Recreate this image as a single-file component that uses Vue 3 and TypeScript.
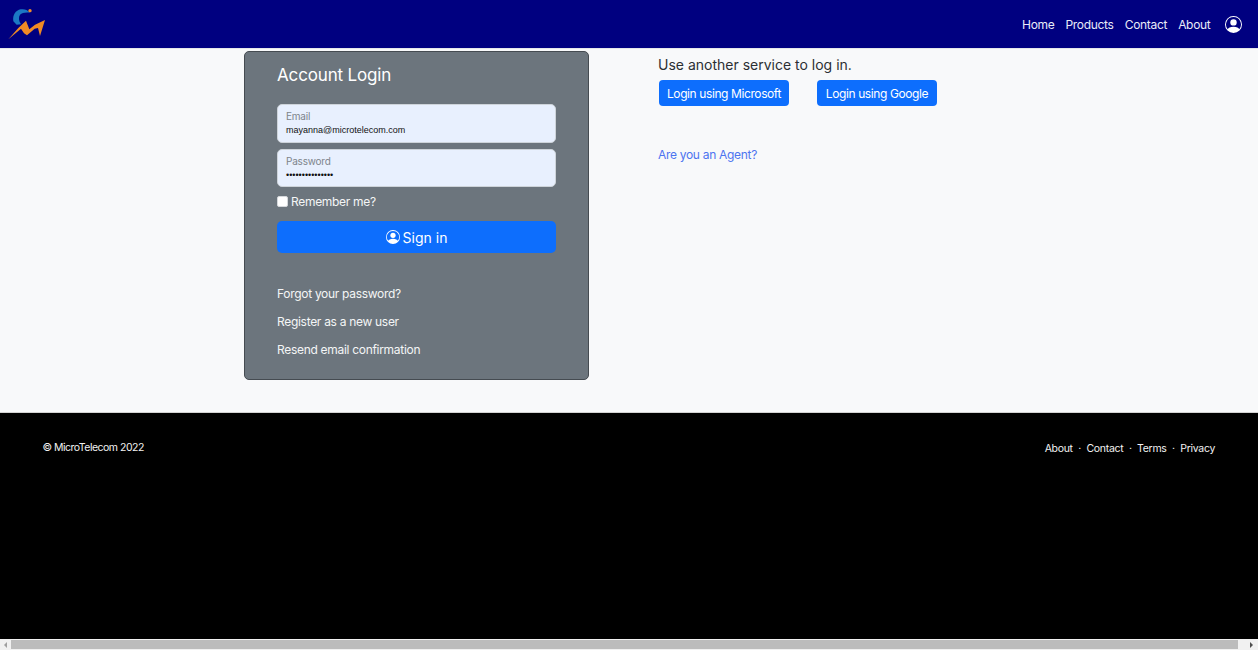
<script setup lang="ts">
const navLinks: string[] = ['Home', 'Products', 'Contact', 'About']
const cardLinks: string[] = ['Forgot your password?', 'Register as a new user', 'Resend email confirmation']
const footerLinks: string[] = ['About', 'Contact', 'Terms', 'Privacy']
</script>

<template>
  <div class="page">
    <header class="nav">
      <a class="logo" href="#" aria-label="MicroTelecom">
        <svg width="50" height="40" viewBox="0 12 150 120">
          <path d="M40 64C37 45 47 31 62 28C72 26 82 29 90 38C78 36 66 38 60 44C55 52 56 62 63 73L50 74Z" fill="#1b78c4" />
          <circle cx="90" cy="32" r="5" fill="#ee8a2a" />
          <path d="M25 118L55 84L78 62L88 88L105 74L135 60L120 108L114 84L104 86L81 106L72 100L63 86Z" fill="#f08a24" />
        </svg>
      </a>
      <nav class="nav-links">
        <a v-for="link in navLinks" :key="link" href="#">{{ link }}</a>
        <a class="account" href="#" aria-label="Account">
          <svg width="17" height="17" viewBox="0 0 16 16" fill="#fff">
            <path d="M11 6a3 3 0 1 1-6 0 3 3 0 0 1 6 0z" />
            <path fill-rule="evenodd" d="M0 8a8 8 0 1 1 16 0A8 8 0 0 1 0 8zm8-7a7 7 0 0 0-5.468 11.370C3.242 11.226 4.805 10 8 10s4.757 1.225 5.468 2.370A7 7 0 0 0 8 1z" />
          </svg>
        </a>
      </nav>
    </header>

    <main class="main">
      <section class="card">
        <h2>Account Login</h2>
        <div class="field">
          <span class="label">Email</span>
          <span class="value">mayanna@microtelecom.com</span>
        </div>
        <div class="field">
          <span class="label">Password</span>
          <span class="value">•••••••••••••••</span>
        </div>
        <label class="remember">
          <input type="checkbox" />
          <span>Remember me?</span>
        </label>
        <button class="signin" type="button">
          <svg width="14" height="14" viewBox="0 0 16 16" fill="#fff">
            <path d="M11 6a3 3 0 1 1-6 0 3 3 0 0 1 6 0z" />
            <path fill-rule="evenodd" d="M0 8a8 8 0 1 1 16 0A8 8 0 0 1 0 8zm8-7a7 7 0 0 0-5.468 11.370C3.242 11.226 4.805 10 8 10s4.757 1.225 5.468 2.370A7 7 0 0 0 8 1z" />
          </svg>
          <span>Sign in</span>
        </button>
        <div class="card-links">
          <a v-for="link in cardLinks" :key="link" href="#">{{ link }}</a>
        </div>
      </section>

      <section class="services">
        <h3>Use another service to log in.</h3>
        <div class="service-buttons">
          <button class="ms" type="button">Login using Microsoft</button>
          <button class="google" type="button">Login using Google</button>
        </div>
        <a class="agent" href="#">Are you an Agent?</a>
      </section>
    </main>

    <footer class="footer">
      <span class="copy">© MicroTelecom 2022</span>
      <div class="footer-links">
        <template v-for="(link, i) in footerLinks" :key="link">
          <span v-if="i > 0" class="sep">·</span>
          <a href="#">{{ link }}</a>
        </template>
      </div>
    </footer>

    <div class="scrollbar">
      <span class="arrow left"></span>
      <span class="thumb"></span>
      <span class="arrow right"></span>
    </div>
  </div>
</template>

<style>
html, body { margin: 0; padding: 0; overflow: hidden; }
</style>

<style scoped>
.page {
  width: 1258px;
  height: 650px;
  display: flex;
  flex-direction: column;
  overflow: hidden;
  background: #f8f9fa;
  font-family: Inter, "Liberation Sans", sans-serif;
  font-size: 12px;
  letter-spacing: -0.3px;
  color: #212529;
}
a { color: inherit; text-decoration: none; }

.nav {
  flex: 0 0 49px;
  box-sizing: border-box;
  background: #000080;
  border-bottom: 1px solid #e4e6ea;
  display: flex;
  align-items: center;
  justify-content: space-between;
  padding: 0 16.500px 0 0;
}
.logo { display: flex; height: 40px; }
.nav-links {
  display: flex;
  align-items: center;
  color: #e9ebf8;
  font-size: 12px;
  letter-spacing: -0.3px;
}
.nav-links a { margin-left: 11px; }
.nav-links a:first-child { margin-left: 0; }
.nav-links .account { display: flex; margin-left: 14px; }

.main {
  flex: 0 0 363px;
  display: flex;
  box-sizing: border-box;
  padding: 2px 0 0 244px;
}
.card {
  width: 345px;
  height: 329px;
  box-sizing: border-box;
  background: #6c757d;
  border: 1px solid #454b51;
  border-radius: 5px;
  padding: 0 32px;
  color: #f4f5f6;
}
.card h2 {
  margin: 12px 0 18px;
  font-size: 17px;
  line-height: 22px;
  font-weight: 400;
  letter-spacing: -0.15px;
  color: #fff;
}
.field {
  box-sizing: border-box;
  height: 38.500px;
  margin-bottom: 6px;
  padding: 5px 8px 0;
  background: #e8f0fe;
  border: 1px solid #ced4da;
  border-radius: 5px;
  display: flex;
  flex-direction: column;
}
.label { font-size: 10px; line-height: 13px; letter-spacing: -0.2px; color: #7d848b; }
.value {
  font-family: "Liberation Sans", Arial, sans-serif;
  font-size: 9px;
  line-height: 13px;
  letter-spacing: 0;
  color: #111;
  margin-top: 1px;
}
.remember {
  display: flex;
  align-items: center;
  height: 16px;
}
.remember input {
  appearance: none;
  width: 11px;
  height: 11px;
  margin: 0 3px 0 0;
  background: #fff;
  border: 1px solid #d5d8db;
  border-radius: 2px;
  box-sizing: border-box;
}
.signin {
  width: 100%;
  height: 32px;
  margin-top: 12px;
  display: flex;
  align-items: center;
  justify-content: center;
  gap: 3px;
  border: none;
  border-radius: 5px;
  background: #0d6efd;
  color: #fff;
  font-family: inherit;
  font-size: 14px;
}
.card-links {
  display: flex;
  flex-direction: column;
  gap: 12px;
  margin-top: 33px;
  line-height: 16px;
}

.services { margin-left: 69px; }
.services h3 {
  margin: 3.500px 0 6.500px;
  font-size: 14px;
  line-height: 19px;
  font-weight: 400;
  letter-spacing: 0;
  color: #2b2f33;
}
.service-buttons { display: flex; }
.service-buttons button {
  height: 26px;
  padding: 0;
  border: none;
  border-radius: 4px;
  background: #0d6efd;
  color: #fff;
  font-family: inherit;
  font-size: 12px;
  letter-spacing: -0.4px;
}
.ms { width: 130px; margin-left: 1px; }
.google { width: 120px; margin-left: 28px; }
.agent {
  display: block;
  margin-top: 41px;
  line-height: 16px;
  color: #4d74f0;
}

.footer {
  flex: 0 0 227px;
  box-sizing: border-box;
  background: #000;
  color: #f2f2f2;
  border-top: 1px solid #d3d3d3;
  display: flex;
  justify-content: space-between;
  padding: 27px 43px 0;
  font-size: 10.500px;
  letter-spacing: -0.3px;
  line-height: 15px;
}
.copy { letter-spacing: -0.5px; margin-left: -0.500px; }
.footer-links { display: flex; margin-top: 1px; }
.sep { margin: 0 5.500px; }

.scrollbar {
  flex: 0 0 11px;
  background: #f1f1f1;
  display: flex;
  align-items: center;
}
.thumb { flex: 1; height: 9px; background: #bcbcbc; }
.arrow { display: flex; justify-content: center; }
.arrow.left { width: 11px; }
.arrow.right { width: 20px; justify-content: flex-end; padding-right: 5px; box-sizing: border-box; }
.arrow.left::before, .arrow.right::before {
  content: "";
  border-top: 3px solid transparent;
  border-bottom: 3px solid transparent;
}
.arrow.left::before { border-right: 3px solid #a0a0a0; }
.arrow.right::before { border-left: 3px solid #505050; }
</style>
